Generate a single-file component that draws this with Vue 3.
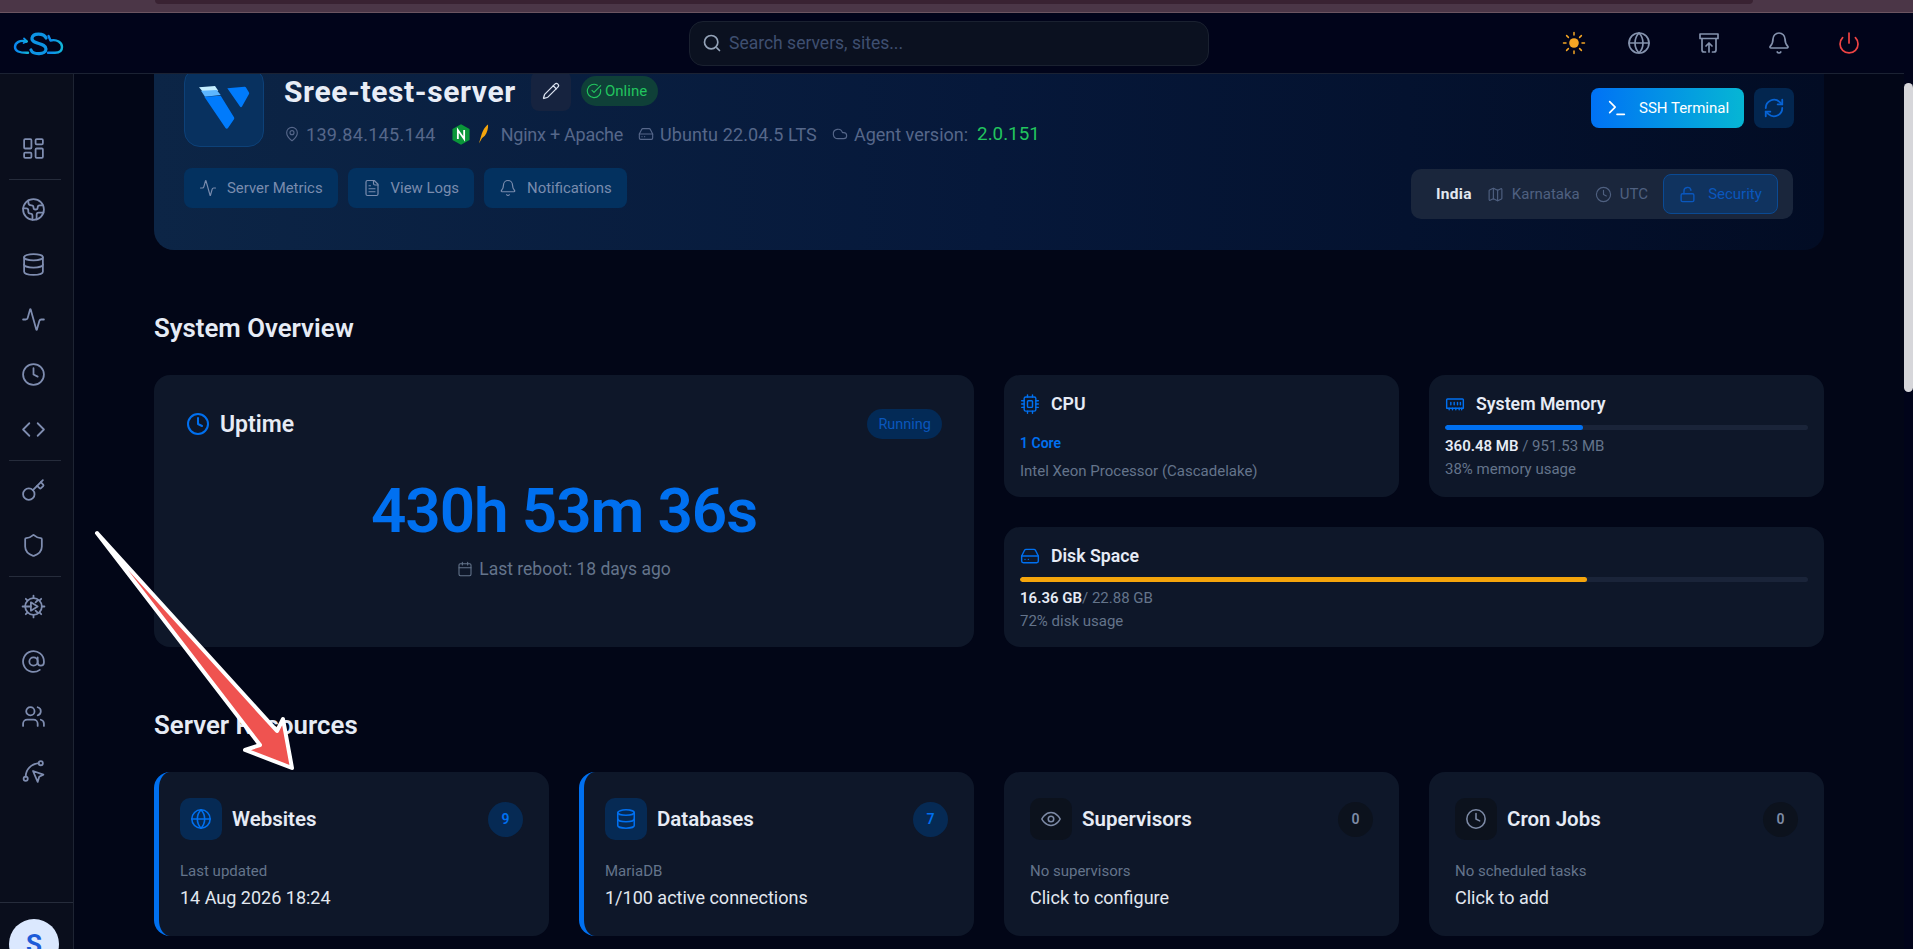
<script setup>
const icons = {
  dash: '<rect x="3" y="3" width="7" height="9" rx="1"/><rect x="14" y="3" width="7" height="5" rx="1"/><rect x="14" y="12" width="7" height="9" rx="1"/><rect x="3" y="16" width="7" height="5" rx="1"/>',
  earth: '<path d="M21.54 15H17a2 2 0 0 0-2 2v4.54"/><path d="M7 3.34V5a3 3 0 0 0 3 3a2 2 0 0 1 2 2c0 1.1.9 2 2 2a2 2 0 0 0 2-2c0-1.1.9-2 2-2h3.17"/><path d="M11 21.95V18a2 2 0 0 0-2-2a2 2 0 0 1-2-2v-1a2 2 0 0 0-2-2H2.05"/><circle cx="12" cy="12" r="10"/>',
  db: '<ellipse cx="12" cy="5" rx="9" ry="3"/><path d="M3 5v14a9 3 0 0 0 18 0V5"/><path d="M3 12a9 3 0 0 0 18 0"/>',
  activity: '<path d="M22 12h-2.48a2 2 0 0 0-1.93 1.46l-2.35 8.36a.25.25 0 0 1-.48 0L9.24 2.18a.25.25 0 0 0-.48 0l-2.35 8.36A2 2 0 0 1 4.49 12H2"/>',
  clock: '<circle cx="12" cy="12" r="10"/><path d="M12 6v6l4 2"/>',
  code: '<path d="m16 18 6-6-6-6"/><path d="m8 6-6 6 6 6"/>',
  key: '<path d="m15.5 7.5 2.3 2.3a1 1 0 0 0 1.4 0l2.1-2.1a1 1 0 0 0 0-1.4L19 4"/><path d="m21 2-9.6 9.6"/><circle cx="7.5" cy="15.5" r="5.5"/>',
  shield: '<path d="M20 13c0 5-3.5 7.5-7.66 8.95a1 1 0 0 1-.67-.01C7.5 20.5 4 18 4 13V6a1 1 0 0 1 1-1c2 0 4.5-1.2 6.24-2.72a1.17 1.17 0 0 1 1.52 0C14.51 3.81 17 5 19 5a1 1 0 0 1 1 1z"/>',
  gear: '<circle cx="12" cy="12" r="8"/><path d="M12 1.500V4M12 20v2.500M1.500 12H4M20 12h2.500M4.600 4.600l1.700 1.700M17.700 17.700l1.700 1.700M4.600 19.400l1.700-1.700M17.700 6.300l1.700-1.700"/><path d="M9.500 8v8l6.500-4z"/><path d="M4 12h5.500M14 8l2-2M14 16l2 2"/>',
  at: '<circle cx="12" cy="12" r="4"/><path d="M16 8v5a3 3 0 0 0 6 0v-1a10 10 0 1 0-4 8"/>',
  users: '<path d="M16 21v-2a4 4 0 0 0-4-4H6a4 4 0 0 0-4 4v2"/><circle cx="9" cy="7" r="4"/><path d="M22 21v-2a4 4 0 0 0-3-3.870"/><path d="M16 3.130a4 4 0 0 1 0 7.750"/>',
  route: '<circle cx="4.500" cy="19" r="2"/><circle cx="19" cy="4" r="2"/><path d="M4.500 17c0-7 5-12 12.500-13"/><path d="M11.500 11.500l10 3.500-4 2-1.500 5z"/>',
  globe: '<circle cx="12" cy="12" r="10"/><path d="M12 2a14.500 14.500 0 0 0 0 20 14.500 14.500 0 0 0 0-20"/><path d="M2 12h20"/>',
  archive: '<path d="M3 3h18v4.500H3z"/><path d="M5 7.500V19a2 2 0 0 0 2 2h1.500"/><path d="M19 7.500V19a2 2 0 0 1-2 2h-1.500"/><path d="M12 21v-8.500"/><path d="M9 15l3-3 3 3"/>',
  bell: '<path d="M10.268 21a2 2 0 0 0 3.464 0"/><path d="M3.262 15.326A1 1 0 0 0 4 17h16a1 1 0 0 0 .74-1.673C19.41 13.956 18 12.499 18 8A6 6 0 0 0 6 8c0 4.499-1.411 5.956-2.738 7.326"/>',
  power: '<path d="M12 2v10"/><path d="M18.400 6.600a9 9 0 1 1-12.770.04"/>',
  search: '<circle cx="11" cy="11" r="8"/><path d="m21 21-3.200-3.200"/>',
  pencil: '<path d="M21.170 6.810a2.820 2.820 0 0 0-3.990-3.990L3.840 16.170a2 2 0 0 0-.5.83l-1.320 4.350a.5.5 0 0 0 .62.62l4.350-1.320a2 2 0 0 0 .83-.5z"/><path d="m15 5 4 4"/>',
  check: '<path d="M21.800 10A10 10 0 1 1 17 3.340"/><path d="m9 11 3 3L22 4"/>',
  pin: '<path d="M20 10c0 5-5.500 10.200-7.400 11.800a1 1 0 0 1-1.200 0C9.500 20.200 4 15 4 10a8 8 0 0 1 16 0"/><circle cx="12" cy="10" r="3"/>',
  hdd: '<path d="M22 12H2"/><path d="M5.450 5.110 2 12v6a2 2 0 0 0 2 2h16a2 2 0 0 0 2-2v-6l-3.450-6.890A2 2 0 0 0 16.760 4H7.240a2 2 0 0 0-1.790 1.110"/><path d="M6 16h.01M10 16h.01"/>',
  cloud: '<path d="M17.500 19H9a7 7 0 1 1 6.710-9h1.790a4.500 4.500 0 1 1 0 9"/>',
  file: '<path d="M15 2H6a2 2 0 0 0-2 2v16a2 2 0 0 0 2 2h12a2 2 0 0 0 2-2V7z"/><path d="M14 2v4a2 2 0 0 0 2 2h4"/><path d="M10 9H8M16 13H8M16 17H8"/>',
  terminal: '<path d="m4 17 6-6-6-6"/><path d="M12 19h8"/>',
  refresh: '<path d="M3 12a9 9 0 0 1 15-6.700L21 8"/><path d="M21 3v5h-5"/><path d="M21 12a9 9 0 0 1-15 6.700L3 16"/><path d="M8 16H3v5"/>',
  map: '<path d="M14.100 5.600a2 2 0 0 0 1.800 0l3.700-1.800A1 1 0 0 1 21 4.600v12.800a1 1 0 0 1-.6.9l-4.500 2.200a2 2 0 0 1-1.800 0l-4.200-2.100a2 2 0 0 0-1.800 0l-3.700 1.800A1 1 0 0 1 3 19.400V6.600a1 1 0 0 1 .6-.9l4.500-2.200a2 2 0 0 1 1.800 0z"/><path d="M15 5.800v15M9 3.200v15"/>',
  lock: '<rect x="3" y="11" width="18" height="11" rx="2"/><path d="M7 11V7a5 5 0 0 1 9.900-1"/>',
  calendar: '<rect x="3" y="4" width="18" height="18" rx="2"/><path d="M8 2v4M16 2v4M3 10h18"/>',
  cpu: '<rect x="5" y="3.500" width="14" height="17" rx="2"/><rect x="9" y="8" width="6" height="8" rx="1"/><path d="M9 1v2.500M15 1v2.500M9 20.500V23M15 20.500V23M2 8h3M2 12h3M2 16h3M19 8h3M19 12h3M19 16h3"/>',
  ram: '<path d="M3 6h18a1 1 0 0 1 1 1v10H2V7a1 1 0 0 1 1-1z"/><path d="M7 10v3M11 10v3M15 10v3M18.500 10v3M5 17v2M9 17v2M13 17v2M17 17v2M20 17v2"/>',
  eye: '<path d="M2 12s3.500-7 10-7 10 7 10 7-3.500 7-10 7-10-7-10-7"/><circle cx="12" cy="12" r="3"/>',
}

const sideGroups = [['dash'], ['earth', 'db', 'activity', 'clock', 'code'], ['key', 'shield'], ['gear', 'at', 'users', 'route']]
const headerIcons = ['globe', 'archive', 'bell']
const heroActions = [
  { icon: 'activity', label: 'Server Metrics' },
  { icon: 'file', label: 'View Logs' },
  { icon: 'bell', label: 'Notifications' },
]
const resources = [
  { icon: 'globe', name: 'Websites', count: 9, sub: 'Last updated', value: '14 Aug 2026 18:24', on: true },
  { icon: 'db', name: 'Databases', count: 7, sub: 'MariaDB', value: '1/100 active connections', on: true },
  { icon: 'eye', name: 'Supervisors', count: 0, sub: 'No supervisors', value: 'Click to configure', on: false },
  { icon: 'clock', name: 'Cron Jobs', count: 0, sub: 'No scheduled tasks', value: 'Click to add', on: false },
]
</script>

<template>
  <div class="page">
    <div class="strip"><div class="strip-inner"></div></div>
    <div class="shell">
      <div class="frame">
        <header class="header">
          <svg class="logo" viewBox="0 0 52 28" width="52" height="28" fill="none" stroke-linecap="round" stroke-linejoin="round">
            <defs>
              <linearGradient id="lg" x1="0" x2="1" y1="0" y2="0">
                <stop offset="0" stop-color="#0a84f0" />
                <stop offset="1" stop-color="#11b5d8" />
              </linearGradient>
            </defs>
            <path d="M13.500 11.500C7 9.500 2 12.500 2 17c0 4 4 6 13 5.800" stroke="url(#lg)" stroke-width="2.400" />
            <path d="M11 8.500l3 3-3.500 1.500" stroke="url(#lg)" stroke-width="1.800" />
            <path d="M33 8C31 3 20 2.500 19 8c-1 6.500 14 4.500 14 11 0 6-13 6-15 1" stroke="#0d94e4" stroke-width="3.200" />
            <path d="M35.500 6l2 4.500c6.500-1.500 11.500 2 11.500 6.500 0 4-3 5.800-7 5.800h-7" stroke="url(#lg)" stroke-width="2.400" />
          </svg>
          <div class="search">
            <svg class="ic search-ic" viewBox="0 0 24 24" v-html="icons.search"></svg>
            <span>Search servers, sites...</span>
          </div>
          <div class="head-actions">
            <svg class="sun" viewBox="0 0 24 24" width="24" height="24" fill="none" stroke="#f5a524" stroke-width="1.500" stroke-linecap="round">
              <circle cx="12" cy="12" r="4.800" fill="#f5a524" stroke="none" />
              <path d="M12 1.500v2.500M12 20v2.500M1.500 12H4M20 12h2.500M4.600 4.600l1.800 1.800M17.600 17.600l1.800 1.800M4.600 19.400l1.800-1.800M17.600 6.400l1.800-1.800" />
            </svg>
            <svg v-for="n in headerIcons" :key="n" class="ic head-ic" viewBox="0 0 24 24" v-html="icons[n]"></svg>
            <svg class="ic head-ic power" viewBox="0 0 24 24" v-html="icons.power"></svg>
          </div>
        </header>

        <div class="below">
          <aside class="sidebar">
            <nav class="nav">
              <template v-for="(group, gi) in sideGroups" :key="gi">
                <div v-if="gi > 0" class="divider"></div>
                <a v-for="n in group" :key="n" class="nav-item">
                  <svg class="ic nav-ic" viewBox="0 0 24 24" v-html="icons[n]"></svg>
                </a>
              </template>
            </nav>
            <div class="side-foot"><div class="avatar">S</div></div>
          </aside>

          <main class="main">
            <section class="hero">
              <div class="hero-left">
                <div class="hero-top">
                  <div class="brand">
                    <svg viewBox="0 0 80 80" width="80" height="80">
                      <path d="M15 20.300 31 19l3.300 4.700-15 1.600z" fill="#c4eeff" />
                      <path d="M17 23.700 32.700 23l4 5-15.700 1.700z" fill="#5db6ff" />
                      <path d="M20.300 29.700 36.700 28.700 50 50.300a2 2 0 0 1 0 2L44 61a1.500 1.500 0 0 1-2.500 0z" fill="#007bfc" />
                      <path d="M43.300 21.300 60.500 19.700a1.500 1.500 0 0 1 1.500.8l3 5a1.500 1.500 0 0 1 0 1.500L58 39.500a1.200 1.200 0 0 1-2 0z" fill="#007bfc" />
                    </svg>
                  </div>
                  <div class="hero-info">
                    <div class="title-row">
                      <h1>Sree-test-server</h1>
                      <button class="edit"><svg class="ic" viewBox="0 0 24 24" v-html="icons.pencil"></svg></button>
                      <span class="online"><svg class="ic" viewBox="0 0 24 24" v-html="icons.check"></svg>Online</span>
                    </div>
                    <div class="meta">
                      <svg class="ic m-ic" viewBox="0 0 24 24" v-html="icons.pin"></svg>
                      <span class="ip">139.84.145.144</span>
                      <svg class="nginx" viewBox="0 0 20 23" width="18" height="21">
                        <path d="M10 0l9.500 5.500v12L10 23 .5 17.500v-12z" fill="#0a9639" />
                        <path d="M6.500 16.500v-10l7 10v-10" fill="none" stroke="#fff" stroke-width="2" />
                      </svg>
                      <svg class="feather" viewBox="0 0 12 22" width="11" height="20">
                        <path d="M1 21.500 4 11C6 5 9 2 11 .5c.5 4-1 9-3.500 12.500L4.500 15.500z" fill="#f5a50c" />
                      </svg>
                      <span class="stack">Nginx + Apache</span>
                      <svg class="ic m-ic" viewBox="0 0 24 24" v-html="icons.hdd"></svg>
                      <span class="os">Ubuntu 22.04.5 LTS</span>
                      <svg class="ic m-ic" viewBox="0 0 24 24" v-html="icons.cloud"></svg>
                      <span>Agent version:</span>
                      <span class="ver">2.0.151</span>
                    </div>
                  </div>
                </div>
                <div class="hero-actions">
                  <button v-for="a in heroActions" :key="a.label" class="ghost">
                    <svg class="ic" viewBox="0 0 24 24" v-html="icons[a.icon]"></svg>
                    {{ a.label }}
                  </button>
                </div>
              </div>
              <div class="hero-right">
                <div class="hero-btns">
                  <button class="ssh"><svg class="ic" viewBox="0 0 24 24" v-html="icons.terminal"></svg>SSH Terminal</button>
                  <button class="refresh"><svg class="ic" viewBox="0 0 24 24" v-html="icons.refresh"></svg></button>
                </div>
                <div class="loc">
                  <b>India</b>
                  <span class="loc-item"><svg class="ic" viewBox="0 0 24 24" v-html="icons.map"></svg>Karnataka</span>
                  <span class="loc-item"><svg class="ic" viewBox="0 0 24 24" v-html="icons.clock"></svg>UTC</span>
                  <span class="sec"><svg class="ic" viewBox="0 0 24 24" v-html="icons.lock"></svg>Security</span>
                </div>
              </div>
            </section>

            <h2>System Overview</h2>
            <section class="overview">
              <div class="card uptime">
                <div class="up-head">
                  <svg class="ic up-ic" viewBox="0 0 24 24" v-html="icons.clock"></svg>
                  <h3>Uptime</h3>
                  <span class="running">Running</span>
                </div>
                <div class="up-value">430h 53m 36s</div>
                <div class="up-sub"><svg class="ic" viewBox="0 0 24 24" v-html="icons.calendar"></svg>Last reboot: 18 days ago</div>
              </div>
              <div class="card small">
                <div class="small-head"><svg class="ic s-ic" viewBox="0 0 24 24" v-html="icons.cpu"></svg><h4>CPU</h4></div>
                <div class="core">1 Core</div>
                <div class="muted">Intel Xeon Processor (Cascadelake)</div>
              </div>
              <div class="card small">
                <div class="small-head"><svg class="ic s-ic" viewBox="0 0 24 24" v-html="icons.ram"></svg><h4>System Memory</h4></div>
                <div class="bar"><div class="fill" :style="{ width: '38%' }"></div></div>
                <div class="val"><b>360.48 MB</b> / 951.53 MB</div>
                <div class="muted">38% memory usage</div>
              </div>
              <div class="card small wide">
                <div class="small-head"><svg class="ic s-ic" viewBox="0 0 24 24" v-html="icons.hdd"></svg><h4>Disk Space</h4></div>
                <div class="bar"><div class="fill amber" :style="{ width: '72%' }"></div></div>
                <div class="val"><b>16.36 GB</b>/ 22.88 GB</div>
                <div class="muted">72% disk usage</div>
              </div>
            </section>

            <h2>Server Resources</h2>
            <section class="resources">
              <div v-for="r in resources" :key="r.name" class="card res" :class="{ on: r.on }">
                <div class="res-head">
                  <span class="res-ic"><svg class="ic" viewBox="0 0 24 24" v-html="icons[r.icon]"></svg></span>
                  <h4>{{ r.name }}</h4>
                  <span class="count">{{ r.count }}</span>
                </div>
                <div class="res-sub">{{ r.sub }}</div>
                <div class="res-val">{{ r.value }}</div>
              </div>
            </section>
          </main>
        </div>
      </div>
      <div class="scrollbar"><div class="thumb"></div></div>
    </div>

    <svg class="arrow" viewBox="0 0 320 300" width="320" height="300">
      <path d="M97 35 277 233 283 221 292 270 245 252 260 247z" fill="#ef5350" stroke="#fff" stroke-width="4" stroke-linejoin="round" />
    </svg>
  </div>
</template>

<style>
html, body { margin: 0; background: #020617; }
</style>

<style scoped>
.page {
  position: relative;
  width: 1913px;
  height: 949px;
  overflow: hidden;
  display: flex;
  flex-direction: column;
  background: #020617;
  color: #e2e8f0;
  font-family: Roboto, "Noto Sans", sans-serif;
}
.ic { fill: none; stroke: currentColor; stroke-width: 2; stroke-linecap: round; stroke-linejoin: round; flex: none; }
button { font-family: inherit; border: 0; padding: 0; }
h1, h2, h3, h4 { margin: 0; }

.strip { height: 12px; flex: none; padding: 0 160px 0 155px; background: #4b3647; border-bottom: 1px solid #6b5561; }
.strip-inner { height: 4px; background: #392232; border-radius: 0 0 8px 8px; }

.shell { flex: 1; min-height: 0; display: flex; }
.frame { flex: 1; min-width: 0; display: flex; flex-direction: column; }
.scrollbar { width: 9px; flex: none; background: #01041a; }
.thumb { margin-top: 70px; height: 309px; background: #d6d6da; border-radius: 5px; }

.header {
  position: relative;
  z-index: 2;
  height: 60px;
  flex: none;
  display: flex;
  align-items: center;
  padding: 0 43px 0 13px;
  background: #01041a;
  border-bottom: 1px solid #1b2233;
}
.logo { width: 52px; flex: none; margin-top: 1px; }
.search {
  width: 520px;
  height: 45px;
  box-sizing: border-box;
  margin: 0 0 0 624px;
  display: flex;
  align-items: center;
  gap: 7px;
  padding: 0 12px;
  background: #0b1120;
  border: 1px solid #1a2130;
  border-radius: 14px;
  color: #3f4f70;
  font-size: 17.500px;
}
.search-ic { width: 20px; height: 20px; color: #94a3b8; }
.head-actions { margin-left: auto; display: flex; align-items: center; gap: 46px; margin-top: -1px; }
.sun { margin-right: -5px; }
.head-ic { width: 24px; height: 24px; color: #8492ad; stroke-width: 1.700; }
.power { color: #ef4444; }

.below { flex: 1; min-height: 0; display: flex; }
.sidebar {
  width: 73px;
  flex: none;
  display: flex;
  flex-direction: column;
  background: #0a0e1c;
  border-right: 1px solid #1e2433;
}
.nav { flex: 1; padding: 47px 6px 0 0; }
.nav-item { height: 55px; display: flex; align-items: center; justify-content: center; }
.nav-ic { width: 25px; height: 25px; color: #7f8db0; stroke-width: 1.700; }
.divider { height: 1px; margin: 2.500px 6px 2.500px 9px; background: #262c3b; }
.side-foot { height: 47px; flex: none; box-sizing: border-box; padding: 16px 0 0 9px; border-top: 1px solid #262c3b; }
.avatar {
  width: 50px;
  height: 50px;
  border-radius: 50%;
  background: #dbe8fe;
  color: #1d5bd8;
  font-size: 26px;
  font-weight: 700;
  display: flex;
  align-items: center;
  justify-content: center;
}

.main { flex: 1; min-width: 0; overflow: hidden; padding: 0 80px; }
.hero {
  margin-top: -37px;
  height: 213px;
  box-sizing: border-box;
  padding: 30px;
  display: flex;
  justify-content: space-between;
  border-radius: 20px;
  background: linear-gradient(90deg, #0c2546 0%, #06183a 50%, #020c24 100%);
}
.hero-left { display: flex; flex-direction: column; gap: 21px; }
.hero-top { display: flex; gap: 20px; }
.brand {
  width: 80px;
  height: 80px;
  box-sizing: border-box;
  border: 1px solid #0d4178;
  border-radius: 16px;
  background: #08315f;
}
.brand svg { display: block; margin: -1px; }
.hero-info { display: flex; flex-direction: column; gap: 11px; padding-top: 4px; }
.title-row { height: 40px; display: flex; align-items: center; }
h1 { font-size: 30px; font-weight: 700; letter-spacing: .6px; color: #e8edf7; width: 247px; white-space: nowrap; }
.edit { width: 40px; height: 40px; margin-right: 10px; border-radius: 8px; background: #16233f; color: #dbe3f0; display: flex; align-items: center; justify-content: center; }
.edit .ic { width: 18px; height: 18px; stroke-width: 1.700; }
.online { height: 30px; padding: 0 11px 0 5px; display: flex; align-items: center; gap: 3px; border-radius: 15px; background: #0f4038; color: #22c55e; font-size: 15px; }
.online .ic { width: 16px; height: 16px; stroke-width: 1.700; }
.meta { height: 24px; display: flex; align-items: center; color: #56678a; font-size: 18px; white-space: nowrap; }
.m-ic { width: 16px; height: 16px; stroke-width: 1.700; margin-right: 6px; }
.ip { margin-right: 17px; letter-spacing: .3px; }
.nginx { margin-left: -1px; }
.feather { margin: 0 12px 0 8px; }
.stack { margin-right: 15px; letter-spacing: -.25px; }
.os { margin-right: 15px; letter-spacing: .1px; }
.ver { margin-left: 9px; color: #22c55e; font-size: 18.800px; }
.hero-actions { display: flex; gap: 10px; }
.ghost {
  height: 40px;
  padding: 0 15px;
  display: flex;
  align-items: center;
  gap: 10px;
  border-radius: 8px;
  background: #03315f;
  color: #7a8cae;
  font-size: 14.900px;
}
.ghost .ic { width: 18px; height: 18px; stroke-width: 1.600; }

.hero-right { display: flex; flex-direction: column; align-items: flex-end; padding-top: 21px; gap: 41px; }
.hero-btns { display: flex; gap: 10px; }
.ssh {
  width: 153px;
  height: 40px;
  padding: 0 15px;
  display: flex;
  align-items: center;
  gap: 11px;
  border-radius: 8px;
  background: linear-gradient(90deg, #0072f5, #06b6d4);
  color: #fff;
  font-size: 15px;
  white-space: nowrap;
}
.ssh .ic { width: 22px; height: 22px; stroke-width: 1.800; }
.refresh { width: 40px; height: 40px; border-radius: 8px; background: #03264f; color: #0763d4; display: flex; align-items: center; justify-content: center; }
.refresh .ic { width: 22px; height: 22px; }
.loc {
  width: 382px;
  height: 50px;
  box-sizing: border-box;
  margin-right: 1px;
  padding: 0 15px 0 25px;
  display: flex;
  align-items: center;
  justify-content: space-between;
  border-radius: 10px;
  background: #1a263c;
  font-size: 15px;
  color: #4f6080;
}
.loc b { color: #e2e8f0; font-weight: 700; font-size: 15.500px; letter-spacing: .3px; }
.loc-item { display: flex; align-items: center; gap: 8px; }
.loc-item .ic { width: 17px; height: 17px; stroke-width: 1.600; }
.sec {
  width: 115px;
  height: 40px;
  box-sizing: border-box;
  display: flex;
  align-items: center;
  justify-content: center;
  gap: 12px;
  border: 1px solid #0a4a94;
  border-radius: 8px;
  background: #10335f;
  color: #0a57bd;
}
.sec .ic { width: 17px; height: 17px; }

h2 { margin: 63px 0 32px; height: 30px; line-height: 30px; font-size: 25.800px; font-weight: 600; color: #e6ebf5; }

.overview { display: grid; grid-template-columns: repeat(4, 1fr); grid-template-rows: 122px 120px; gap: 30px; }
.card { background: #0e1729; border-radius: 16px; box-sizing: border-box; min-width: 0; }
.uptime { grid-column: span 2; grid-row: span 2; padding: 34px 32px 0 32px; display: flex; flex-direction: column; align-items: center; }
.up-head { align-self: stretch; height: 30px; display: flex; align-items: center; }
.up-ic { width: 24px; height: 24px; color: #0070f0; margin-right: 10px; }
h3 { font-size: 23px; font-weight: 600; color: #e6ebf5; }
.running { margin-left: auto; height: 30px; padding: 0 11px; display: flex; align-items: center; border-radius: 15px; background: #032a56; color: #0a57bd; font-size: 14.500px; }
.up-value { margin-top: 37px; font-size: 62px; line-height: 70px; font-weight: 600; letter-spacing: -1.100px; color: #0070f0; }
.up-sub { margin-top: 13px; display: flex; align-items: center; gap: 6px; color: #64748b; font-size: 17.500px; }
.up-sub .ic { width: 16px; height: 16px; stroke-width: 1.600; }

.small { padding: 17px 16px 0; }
.overview .small.wide { grid-column: 3 / 5; }
.small-head { height: 24px; display: flex; align-items: center; gap: 11px; }
.s-ic { width: 20px; height: 20px; color: #0070f0; stroke-width: 1.700; }
h4 { font-size: 17.700px; font-weight: 600; color: #e6ebf5; }
.core { margin-top: 17px; color: #0070f0; font-size: 14px; font-weight: 600; line-height: 20px; }
.core + .muted { margin-top: 8px; }
.muted { color: #64748b; font-size: 15px; line-height: 20px; }
.bar { margin-top: 9px; height: 5px; border-radius: 3px; background: #1a2439; overflow: hidden; }
.fill { height: 100%; background: #0070f0; border-radius: 3px; }
.fill.amber { background: #f5a50c; }
.val { margin-top: 6px; margin-bottom: 3px; line-height: 20px; font-size: 15px; color: #64748b; }
.val b { color: #e6ebf5; font-weight: 600; }

.resources { display: grid; grid-template-columns: repeat(4, 1fr); gap: 30px; }
.res { height: 164px; padding: 26px 26px 0 26px; }
.res.on { border-left: 5px solid #0070f0; padding-left: 21px; }
.res-head { height: 42px; display: flex; align-items: center; }
.res-ic { width: 42px; height: 42px; border-radius: 10px; background: #0c121d; color: #7d8aa6; display: flex; align-items: center; justify-content: center; margin-right: 10px; }
.res.on .res-ic { background: #062a54; color: #0070f0; }
.res-ic .ic { width: 22px; height: 22px; stroke-width: 1.700; }
.res-head h4 { font-size: 20.500px; }
.count { margin-left: auto; width: 35px; height: 35px; border-radius: 50%; background: #0c121d; color: #7d8aa6; display: flex; align-items: center; justify-content: center; font-size: 14px; font-weight: 600; }
.res.on .count { background: #062a54; color: #0070f0; }
.res-sub { margin-top: 21px; color: #64748b; font-size: 15px; line-height: 20px; }
.res-val { margin-top: 7px; color: #e2e8f0; font-size: 18px; font-weight: 400; line-height: 20px; }

.arrow { position: absolute; left: 0; top: 498px; z-index: 5; pointer-events: none; }
</style>
